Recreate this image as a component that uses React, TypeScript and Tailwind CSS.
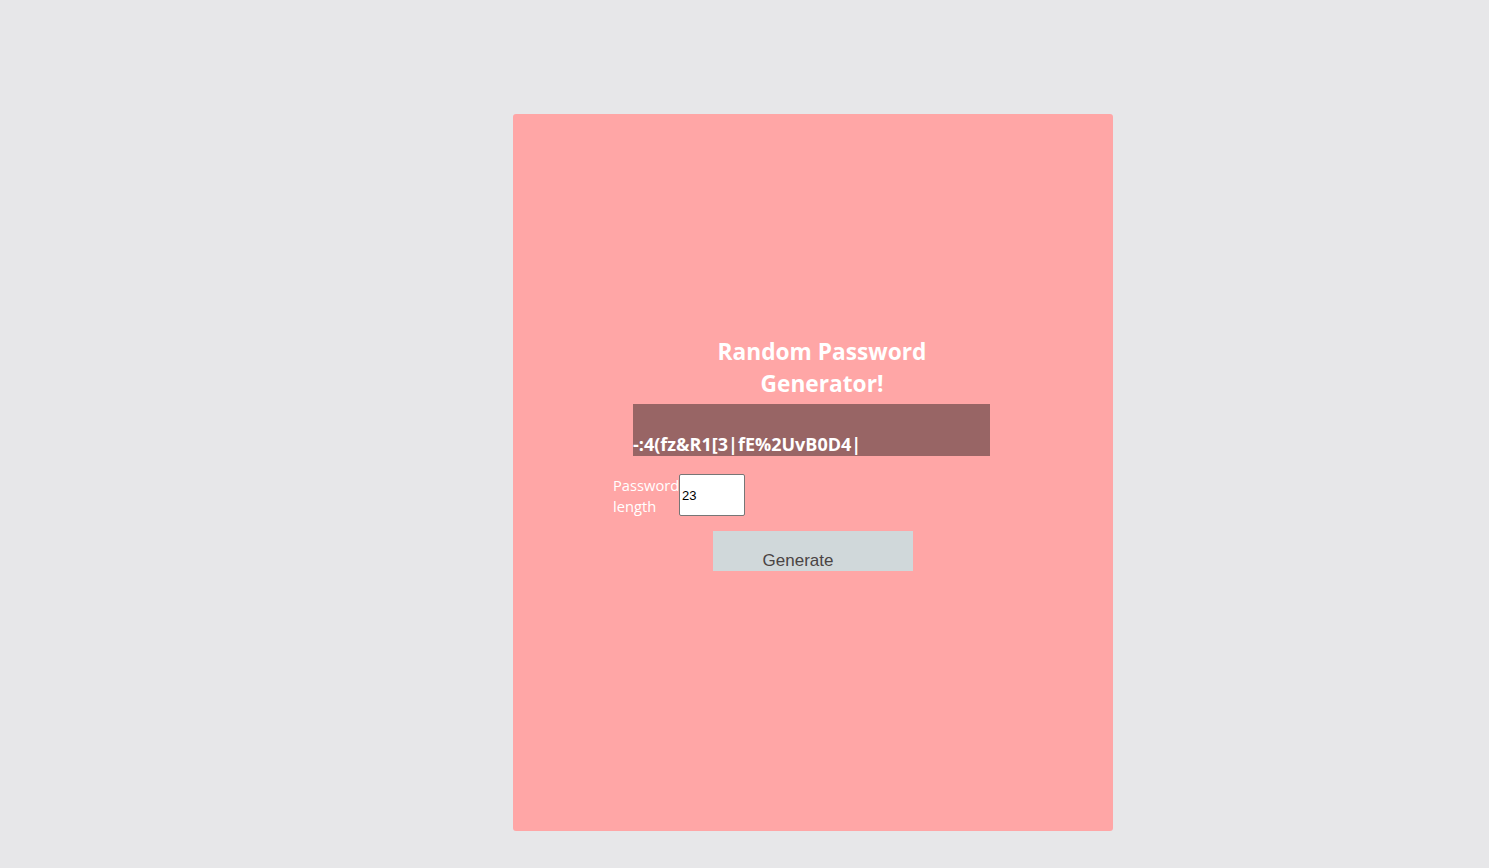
export default function App() {
  return (
    <div className="min-h-screen bg-[#e7e7e9] pt-[114px] font-['Open_Sans',sans-serif]">
      <div className="ml-[513px] w-[600px] h-[717px] rounded-[3px] bg-[#ffa6a6] pt-[222px] box-border">
        {/* Title */}
        <h1 className="ml-[179px] w-[260px] text-center text-[22.7px] leading-8 font-bold text-white">
          Random Password Generator!
        </h1>

        {/* Output */}
        <div className="ml-[120px] mt-[4px] w-[357px] h-[52px] bg-[#986565] flex items-end">
          <span className="text-[18px] leading-6 font-bold text-white">-:4(fz&amp;R1[3|fE%2UvB0D4|</span>
        </div>

        {/* Length row */}
        <div className="ml-[100px] mt-[18px] flex items-start">
          <label className="w-[66px] pt-[1px] text-[14.7px] leading-[21px] text-white">
            Password length
          </label>
          <input
            type="number"
            defaultValue={23}
            className="w-[66px] h-[42px] rounded-[2px] border border-[#767676] bg-white px-[2px] text-[13px] text-black font-['Liberation_Sans',sans-serif] outline-none"
          />
        </div>

        {/* Button */}
        <button className="ml-[200px] mt-[14px] w-[200px] h-[40px] bg-[#d0d8da] pt-[19px] pr-[30px] text-center text-[17px] leading-5 text-[#4a4444] font-['Liberation_Sans',sans-serif]">
          Generate
        </button>
      </div>
    </div>
  );
}
